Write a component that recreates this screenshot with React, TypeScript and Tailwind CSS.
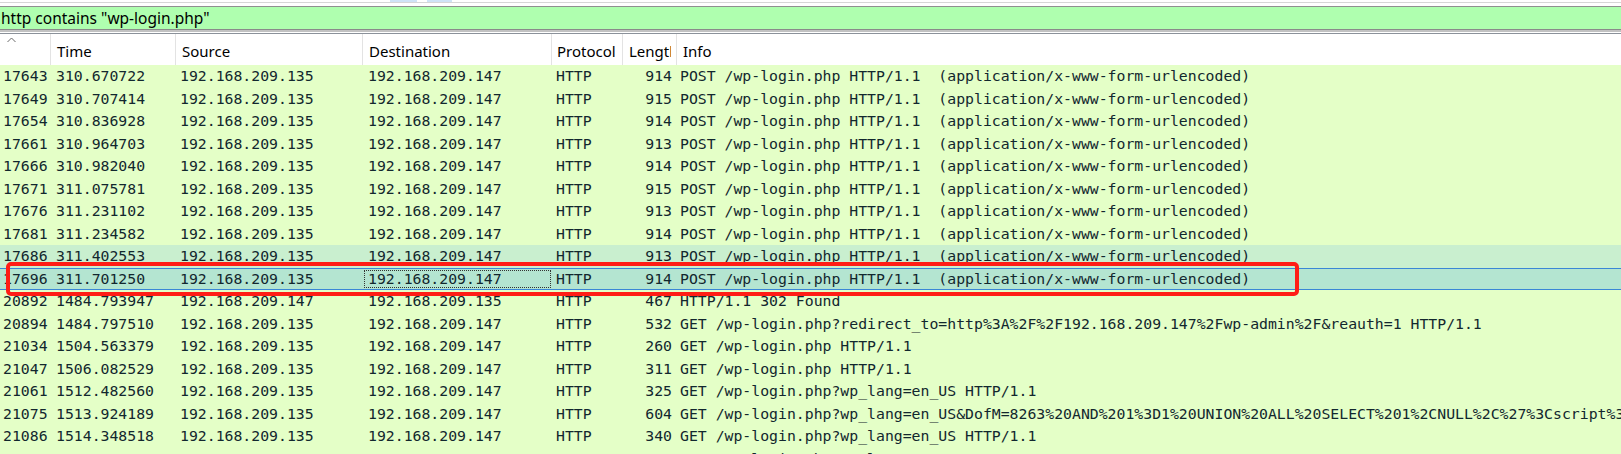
import React from "react";

type Row = {
  no: string;
  time: string;
  src: string;
  dst: string;
  proto: string;
  len: string;
  info: string;
  state?: "hover" | "selected";
};

const POST_INFO = "POST /wp-login.php HTTP/1.1  (application/x-www-form-urlencoded)";
const A = "192.168.209.135";
const B = "192.168.209.147";

const rows: Row[] = [
  { no: "17643", time: "310.670722", src: A, dst: B, proto: "HTTP", len: "914", info: POST_INFO },
  { no: "17649", time: "310.707414", src: A, dst: B, proto: "HTTP", len: "915", info: POST_INFO },
  { no: "17654", time: "310.836928", src: A, dst: B, proto: "HTTP", len: "914", info: POST_INFO },
  { no: "17661", time: "310.964703", src: A, dst: B, proto: "HTTP", len: "913", info: POST_INFO },
  { no: "17666", time: "310.982040", src: A, dst: B, proto: "HTTP", len: "914", info: POST_INFO },
  { no: "17671", time: "311.075781", src: A, dst: B, proto: "HTTP", len: "915", info: POST_INFO },
  { no: "17676", time: "311.231102", src: A, dst: B, proto: "HTTP", len: "913", info: POST_INFO },
  { no: "17681", time: "311.234582", src: A, dst: B, proto: "HTTP", len: "914", info: POST_INFO },
  { no: "17686", time: "311.402553", src: A, dst: B, proto: "HTTP", len: "913", info: POST_INFO, state: "hover" },
  { no: "17696", time: "311.701250", src: A, dst: B, proto: "HTTP", len: "914", info: POST_INFO, state: "selected" },
  { no: "20892", time: "1484.793947", src: B, dst: A, proto: "HTTP", len: "467", info: "HTTP/1.1 302 Found" },
  {
    no: "20894",
    time: "1484.797510",
    src: A,
    dst: B,
    proto: "HTTP",
    len: "532",
    info: "GET /wp-login.php?redirect_to=http%3A%2F%2F192.168.209.147%2Fwp-admin%2F&reauth=1 HTTP/1.1",
  },
  { no: "21034", time: "1504.563379", src: A, dst: B, proto: "HTTP", len: "260", info: "GET /wp-login.php HTTP/1.1" },
  { no: "21047", time: "1506.082529", src: A, dst: B, proto: "HTTP", len: "311", info: "GET /wp-login.php HTTP/1.1" },
  { no: "21061", time: "1512.482560", src: A, dst: B, proto: "HTTP", len: "325", info: "GET /wp-login.php?wp_lang=en_US HTTP/1.1" },
  {
    no: "21075",
    time: "1513.924189",
    src: A,
    dst: B,
    proto: "HTTP",
    len: "604",
    info: "GET /wp-login.php?wp_lang=en_US&DofM=8263%20AND%201%3D1%20UNION%20ALL%20SELECT%201%2CNULL%2C%27%3Cscript%3Ealert%28%22XSS%22%29%3C%2Fscript%3E%27%2Ctable_name%20FROM%20information_schema.tables HTTP/1.1",
  },
  { no: "21086", time: "1514.348518", src: A, dst: B, proto: "HTTP", len: "340", info: "GET /wp-login.php?wp_lang=en_US HTTP/1.1" },
  { no: "21097", time: "1514.758830", src: A, dst: B, proto: "HTTP", len: "336", info: "GET /wp-login.php?wp_lang=en_GB HTTP/1.1" },
];

function HeaderCell({ w, label, pl = "pl-[6px]" }: { w: string; label?: string; pl?: string }) {
  return (
    <div className={`${w} shrink-0 h-full border-r border-[#e3e3e3] ${pl} pt-[3px] flex items-center whitespace-nowrap overflow-hidden`}>
      {label && <span>{label}</span>}
    </div>
  );
}

export default function App() {
  return (
    <div className="w-[1621px] h-[454px] overflow-hidden bg-white relative">
      {/* top strip */}
      <div className="flex h-[2px] bg-white">
        <div className="w-[390px] shrink-0" />
        <div className="w-[27px] shrink-0 bg-[#cfe3f6]" />
        <div className="w-[10px] shrink-0" />
        <div className="w-[25px] shrink-0 bg-[#cfe3f6]" />
      </div>
      <div className="h-px bg-[#d6d6d6]" />
      <div className="h-[3px] bg-white" />
      <div className="h-px bg-[#8f8f8f]" />
      {/* filter bar */}
      <div
        className="h-[22px] bg-[#afffaf] flex items-center pl-[1px] pt-[1px] text-[15.5px] text-black whitespace-pre"
        style={{ fontFamily: '"Noto Sans", "Open Sans", sans-serif' }}
      >
        http contains "wp-login.php"
      </div>
      <div className="h-px bg-[#8a8a8a]" />
      <div className="h-[2px] bg-[#c2c2c2]" />
      <div className="h-px bg-white" />
      <div className="h-px bg-[#8b919a]" />
      {/* header */}
      <div
        className="flex h-[31px] bg-white text-[15px] text-black"
        style={{ fontFamily: '"Noto Sans", "Open Sans", sans-serif' }}
      >
        <div className="w-[51px] shrink-0 h-full border-r border-[#e3e3e3] relative">
          <svg className="absolute left-[7px] top-[3px]" width="9" height="6" viewBox="0 0 9 6">
            <path d="M0.5 5 L4.5 1 L8.5 5" fill="none" stroke="#6b6b6b" strokeWidth="1" />
          </svg>
        </div>
        <HeaderCell w="w-[125px]" label="Time" />
        <HeaderCell w="w-[187px]" label="Source" />
        <HeaderCell w="w-[189px]" label="Destination" />
        <HeaderCell w="w-[71px]" label="Protocol" pl="pl-[5px]" />
        <div className="w-[54px] shrink-0 h-full border-r border-[#e3e3e3] pl-[6px] pt-[3px] flex items-center">
          <span className="w-[42px] overflow-hidden whitespace-nowrap">Length</span>
        </div>
        <div className="flex-1 h-full pl-[6px] pt-[3px] flex items-center">Info</div>
      </div>
      {/* rows */}
      <div
        className="text-[14.8px] text-[#12272e]"
        style={{ fontFamily: '"DejaVu Sans Mono", "Liberation Mono", monospace' }}
      >
        {rows.map((r) => {
          const bg =
            r.state === "selected"
              ? "bg-[#b4e5d1] border-y border-[#3a86d6]"
              : r.state === "hover"
              ? "bg-[#c9efcf]"
              : "bg-[#e4ffc7]";
          return (
            <div key={r.no} className={`flex h-[22.5px] items-center whitespace-pre ${bg}`}>
              <div className="w-[51px] shrink-0 pl-[3px]">{r.no}</div>
              <div className="w-[125px] shrink-0 pl-[5px]">{r.time}</div>
              <div className="w-[187px] shrink-0 pl-[4px]">{r.src}</div>
              <div
                className={`w-[189px] shrink-0 pl-[5px] self-stretch flex items-center ${
                  r.state === "selected" ? "outline-1 outline-dotted outline-[#333] -outline-offset-2" : ""
                }`}
              >
                {r.dst}
              </div>
              <div className="w-[71px] shrink-0 pl-[4px]">{r.proto}</div>
              <div className="w-[54px] shrink-0 pr-[5px] text-right">{r.len}</div>
              <div className="flex-1 min-w-0 pl-[3px] overflow-hidden">{r.info}</div>
            </div>
          );
        })}
      </div>
      {/* red annotation box */}
      <div className="absolute left-[6px] top-[262px] w-[1293px] h-[34px] border-[4px] border-[#ff1d16] rounded-[5px] pointer-events-none" />
    </div>
  );
}
